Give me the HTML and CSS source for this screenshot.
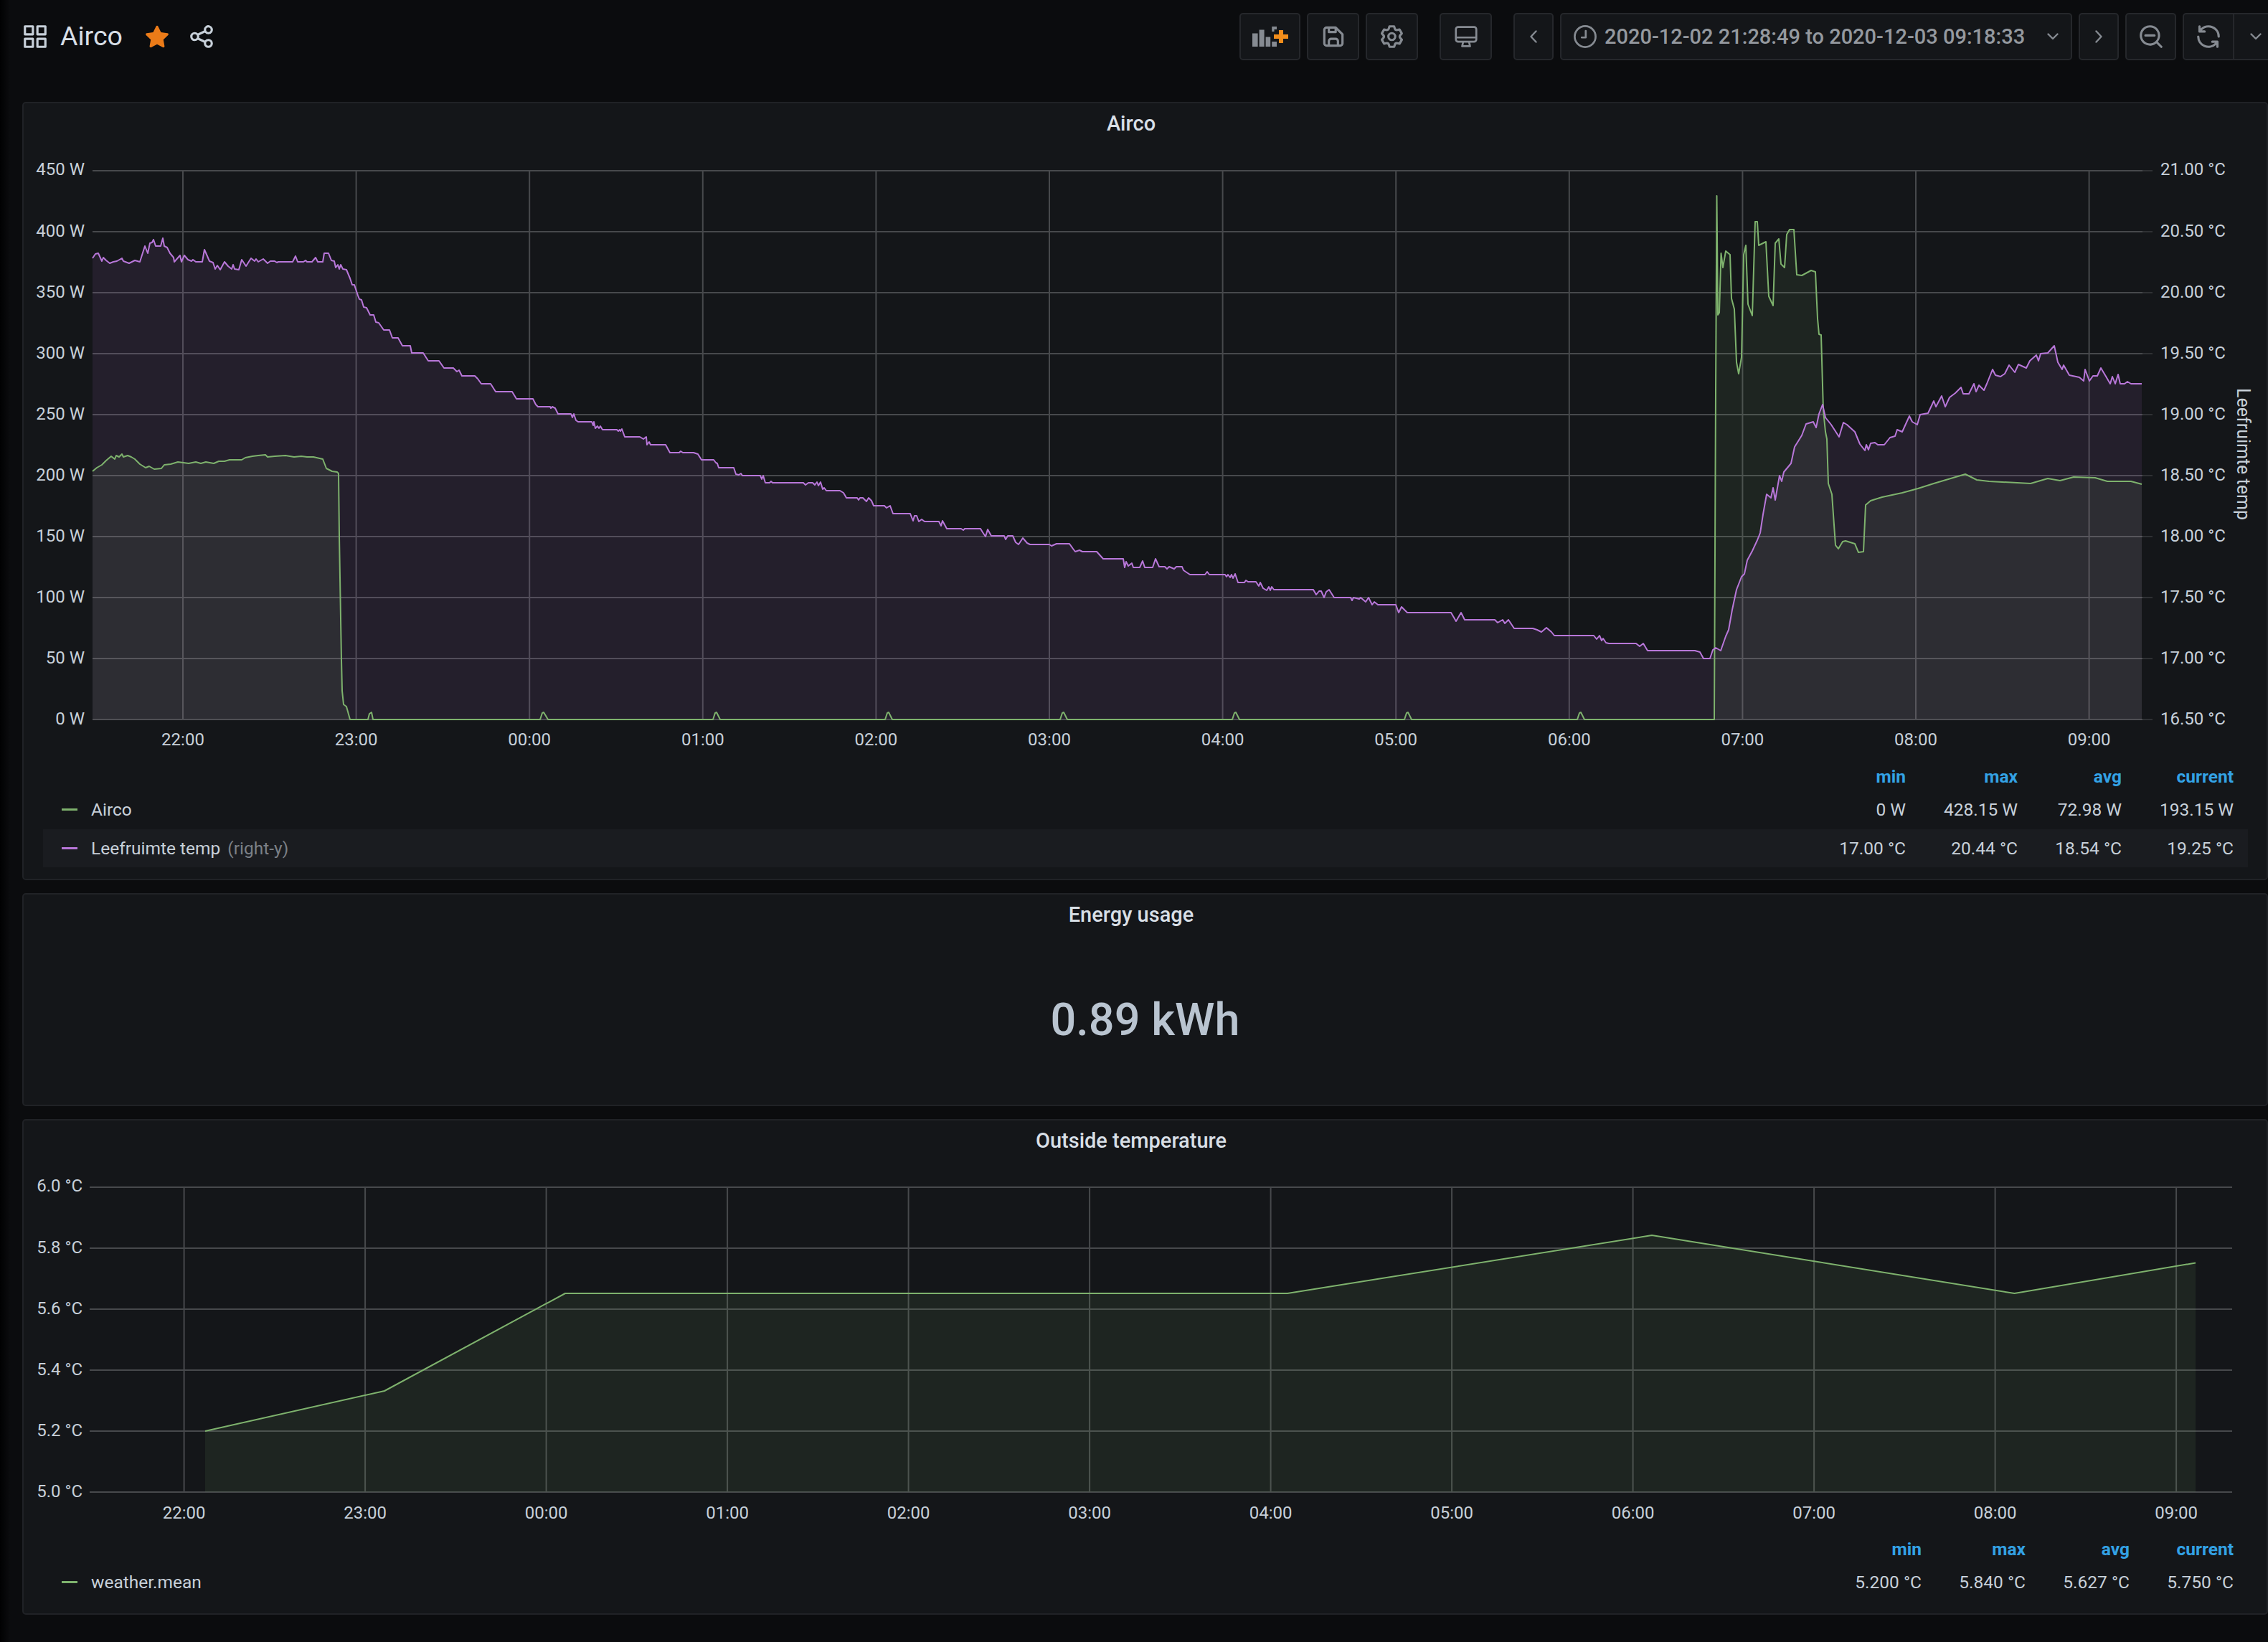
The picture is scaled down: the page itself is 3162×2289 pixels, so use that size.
FILE: index.html
```html
<!DOCTYPE html>
<html lang="en">
<head>
<meta charset="utf-8">
<title>Airco - Grafana</title>
<link rel="stylesheet" href="styles.css">
</head>
<body>
<header class="topbar">
  <div class="title-group">
    <svg class="icon icon-light" viewBox="0 0 24 24"><path d="M10,13H3a1,1,0,0,0-1,1v7a1,1,0,0,0,1,1h7a1,1,0,0,0,1-1V14A1,1,0,0,0,10,13ZM9,20H4V15H9ZM21,2H14a1,1,0,0,0-1,1v7a1,1,0,0,0,1,1h7a1,1,0,0,0,1-1V3A1,1,0,0,0,21,2ZM20,9H15V4h5Zm1,4H14a1,1,0,0,0-1,1v7a1,1,0,0,0,1,1h7a1,1,0,0,0,1-1V14A1,1,0,0,0,21,13Zm-1,7H15V15h5ZM10,2H3A1,1,0,0,0,2,3v7a1,1,0,0,0,1,1h7a1,1,0,0,0,1-1V3A1,1,0,0,0,10,2ZM9,9H4V4H9Z"/></svg>
    <h1 class="dash-title">Airco</h1>
    <svg class="icon icon-star" viewBox="0 0 24 24"><path d="M22,9.67A1,1,0,0,0,21.14,9l-5.69-.83L12.9,3a1,1,0,0,0-1.8,0L8.55,8.16,2.86,9a1,1,0,0,0-.81.68,1,1,0,0,0,.25,1l4.13,4-1,5.68A1,1,0,0,0,6.9,21.44L12,18.77l5.1,2.67a.93.93,0,0,0,.46.12,1,1,0,0,0,.59-.19,1,1,0,0,0,.4-1l-1-5.68,4.13-4A1,1,0,0,0,22,9.67Z"/></svg>
    <svg class="icon icon-light icon-share" viewBox="0 0 24 24"><path d="M18,14a4,4,0,0,0-3.08,1.48l-5.1-2.35a3.64,3.64,0,0,0,0-2.26l5.1-2.35A4,4,0,1,0,14,6a4.17,4.17,0,0,0,.07.71L8.79,9.14a4,4,0,1,0,0,5.72l5.28,2.43A4.17,4.17,0,0,0,14,18a4,4,0,1,0,4-4ZM18,4a2,2,0,1,1-2,2A2,2,0,0,1,18,4ZM6,14a2,2,0,1,1,2-2A2,2,0,0,1,6,14Zm12,6a2,2,0,1,1,2-2A2,2,0,0,1,18,20Z"/></svg>
  </div>
  <div class="toolbar">
    <div class="btn btn-add">
      <svg class="add-panel" viewBox="0 0 50 28">
        <rect class="bar" x="0" y="9.5" width="7.6" height="18.5"/>
        <rect class="bar" x="9.6" y="4.5" width="7" height="23.5"/>
        <rect class="bar" x="18.6" y="14.5" width="6.6" height="13.5"/>
        <path class="bar" d="M27.2 0H34V4H30.5V7H27.2ZM27.2 21H34V28H27.2Z"/>
        <path class="plus" d="M37 5h6v6h7v6h-7v6h-6v-6h-7v-6h7z"/>
      </svg>
    </div>
    <div class="btn btn-save"><svg class="icon" viewBox="0 0 24 24"><path d="M20.71,9.29l-6-6a1,1,0,0,0-.32-.21A1.09,1.09,0,0,0,14,3H6A3,3,0,0,0,3,6V18a3,3,0,0,0,3,3H18a3,3,0,0,0,3-3V10A1,1,0,0,0,20.71,9.29ZM9,5h4V7H9Zm6,14H9V16a1,1,0,0,1,1-1h4a1,1,0,0,1,1,1Zm4-1a1,1,0,0,1-1,1H17V16a3,3,0,0,0-3-3H10a3,3,0,0,0-3,3v3H6a1,1,0,0,1-1-1V6A1,1,0,0,1,6,5H7V8A1,1,0,0,0,8,9h6a1,1,0,0,0,1-1V6.41l4,4Z"/></svg></div>
    <div class="btn btn-gear"><svg class="icon" viewBox="0 0 24 24"><path d="M19.9,12.66a1,1,0,0,1,0-1.32L21.18,9.9a1,1,0,0,0,.12-1.17l-2-3.46a1,1,0,0,0-1.07-.48l-1.88.38a1,1,0,0,1-1.15-.66l-.61-1.83A1,1,0,0,0,13.64,2h-4a1,1,0,0,0-1,.68L8.08,4.51a1,1,0,0,1-1.15.66L5,4.79A1,1,0,0,0,4,5.27L2,8.73A1,1,0,0,0,2.1,9.9l1.27,1.44a1,1,0,0,1,0,1.32L2.1,14.1A1,1,0,0,0,2,15.27l2,3.46a1,1,0,0,0,1.07.48l1.88-.38a1,1,0,0,1,1.15.66l.61,1.83a1,1,0,0,0,1,.68h4a1,1,0,0,0,.95-.68l.61-1.83a1,1,0,0,1,1.15-.66l1.88.38a1,1,0,0,0,1.07-.48l2-3.46a1,1,0,0,0-.12-1.17ZM18.41,14l.8.9-1.28,2.22-1.18-.24a3,3,0,0,0-3.45,2L12.92,20H10.36L10,18.86a3,3,0,0,0-3.45-2l-1.18.24L4.07,14.89l.8-.9a3,3,0,0,0,0-4l-.8-.9L5.35,6.89l1.18.24a3,3,0,0,0,3.45-2L10.36,4h2.56l.38,1.14a3,3,0,0,0,3.45,2l1.18-.24,1.28,2.22-.8.9A3,3,0,0,0,18.41,14ZM11.64,8a4,4,0,1,0,4,4A4,4,0,0,0,11.64,8Zm0,6a2,2,0,1,1,2-2A2,2,0,0,1,11.64,14Z"/></svg></div>
    <div class="btn btn-tv"><svg class="icon" viewBox="0 0 24 24"><path class="outline" d="M5 3.500H19A2 2 0 0 1 21 5.500V14.500A2 2 0 0 1 19 16.500H5A2 2 0 0 1 3 14.500V5.500A2 2 0 0 1 5 3.500ZM3 12.800H21M9.500 16.500L8.500 20.500H15.500L14.500 16.500"/></svg></div>
    <div class="btn btn-nav"><svg class="chev-side" viewBox="0 0 10 18"><path class="outline" d="M8.500 1.500L1.500 9L8.500 16.500"/></svg></div>
    <div class="btn btn-time">
      <svg class="icon" viewBox="0 0 24 24"><circle class="outline" cx="12" cy="12" r="9.200"/><path class="outline" d="M12.500 7V12.800H9"/></svg>
      <span class="time-text">2020-12-02 21:28:49 to 2020-12-03 09:18:33</span>
      <svg class="chev-down" viewBox="0 0 16 10"><path class="outline" d="M1.500 1.500L8 8L14.500 1.500"/></svg>
    </div>
    <div class="btn btn-nav"><svg class="chev-side" viewBox="0 0 10 18"><path class="outline" d="M1.500 1.500L8.500 9L1.500 16.500"/></svg></div>
    <div class="btn btn-zoom"><svg class="icon" viewBox="0 0 24 24"><path d="M21.71,20.29,18,16.61A9,9,0,1,0,16.61,18l3.68,3.68a1,1,0,0,0,1.42,0A1,1,0,0,0,21.71,20.29ZM11,18a7,7,0,1,1,7-7A7,7,0,0,1,11,18Zm4-8H7a1,1,0,0,0,0,2h8a1,1,0,0,0,0-2Z"/></svg></div>
    <div class="btn btn-refresh">
      <div class="refresh-icon"><svg class="icon" viewBox="0 0 24 24"><path d="M19.91,15.51H15.38a1,1,0,0,0,0,2h2.4A8,8,0,0,1,4,12a1,1,0,0,0-2,0,10,10,0,0,0,16.88,7.230V21a1,1,0,0,0,2,0V16.500A1,1,0,0,0,19.91,15.51ZM12,2A10,10,0,0,0,5.120,4.770V3a1,1,0,0,0-2,0V7.500a1,1,0,0,0,1,1h4.500a1,1,0,0,0,0-2H6.220A8,8,0,0,1,20,12a1,1,0,0,0,2,0A10,10,0,0,0,12,2Z"/></svg></div>
      <div class="refresh-menu"><svg class="chev-down" viewBox="0 0 16 10"><path class="outline" d="M1.500 1.500L8 8L14.500 1.500"/></svg></div>
    </div>
  </div>
</header>

<main class="dashboard">
  <section class="panel">
    <h2 class="panel-title">Airco</h2>
    <svg class="graph graph-airco" viewBox="33 200 3127 850">
      <path class="grid" d="M129 238H2987M129 323H2987M129 408H2987M129 493H2987M129 578H2987M129 663H2987M129 748H2987M129 833H2987M129 918H2987M129 1003H2987"/>
      <path class="grid" d="M255 238V1003M496.600 238V1003M738.200 238V1003M979.800 238V1003M1221.400 238V1003M1463 238V1003M1704.600 238V1003M1946.200 238V1003M2187.800 238V1003M2429.400 238V1003M2671 238V1003M2912.600 238V1003"/>
      <path class="grid tick" d="M2987 238H3001M2987 323H3001M2987 408H3001M2987 493H3001M2987 578H3001M2987 663H3001M2987 748H3001M2987 833H3001M2987 918H3001M2987 1003H3001"/>
      <path class="area area-green" d="M129 1003L129 657L135 652L142 648L148 642L155 636L160 640L162 635L166 637L170 633L172 637L178 635L183 637L188 640L195 647L203 652L208 650L215 654L225 653L229 648L238 647L248 644L263 646L273 644L280 646L287 644L298 646L305 643L313 643L320 641L337 641L342 638L352 636L360 635L370 634L373 637L383 636L398 635L410 637L420 636L428 637L437 637L450 640L455 653L463 657L470 658L472 660L473 747L476 920L477 963L479 982L483 985L488 1003L2390 1003L2392 546L2393.500 273L2395 439L2397 436L2399.500 353L2402 373L2406 350L2412 355L2414 416L2418 431L2421 505L2424 521L2428 498L2431 355L2434 342L2437 424L2443 440L2447 309L2450 309L2452 342L2462 337L2466 413L2472 426L2475 339L2480 333L2483 368L2488 373L2491 327L2495 320L2501 320L2505 383L2512 384L2525 377L2531 379L2534 444L2536 466L2539 467L2542 572L2545 602L2547 612L2549 674L2554 689L2559 760L2563 765L2569 755L2573 754L2586 758L2591 770L2598 769L2601 704L2608 698L2624 693L2652 687L2674 681L2696 674L2723 666L2740 661L2756 669L2773 671L2831 674L2855 667L2872 670L2891 665L2921 666L2938 671L2971 671L2986 675L2986 1003Z"/>
      <path class="area area-purple" d="M129 1003L129 360L133 354L137 353L142 364L144 359L148 363L153 367L158 365L163 364L170 360L172 364L180 367L188 363L195 365L202 343L206 353L209 339L212 338L214 334L217 343L224 343L227 332L229 343L233 345L237 353L242 359L243 365L251 356L253 365L257 356L262 362L267 364L269 362L273 365L282 365L285 348L289 357L292 364L297 366L300 375L303 370L307 376L313 365L318 371L323 375L325 369L327 375L333 376L337 362L343 371L350 360L355 364L357 361L360 365L367 361L373 367L377 364L383 364L386 366L388 365L408 365L412 357L415 365L423 365L426 363L428 365L435 365L440 359L443 365L450 365L452 353L458 353L462 363L466 364L468 373L471 369L473 375L475 369L478 375L483 376L488 388L491 397L494 397L499 412L501 417L504 418L507 428L511 429L516 439L521 439L524 449L528 450L535 460L543 460L547 471L555 471L561 482L572 482L574 492L585 492L590 492L597 503L612 503L619 513L632 513L637 518L640 516L644 524L662 524L666 528L671 535L684 535L691 546L714 546L720 556L743 556L747 564L750 567L767 567L768 569L770 567L774 569L778 577L796 577L798 582L800 577L803 586L806 588L825 588L827 593L828 588L830 597L833 594L835 597L837 594L840 599L860 599L862 601L864 599L865 601L867 598L871 609L892 609L897 612L901 609L902 620L905 616L907 620L928 620L934 631L947 631L949 629L952 631L967 631L973 633L978 641L995 641L998 645L1000 646L1002 652L1023 652L1026 661L1030 662L1033 660L1035 663L1060 663L1062 668L1064 663L1067 673L1073 673L1075 671L1077 673L1120 673L1123 676L1127 673L1133 673L1136 676L1139 672L1141 677L1144 672L1147 682L1149 680L1152 684L1171 684L1176 687L1180 694L1195 694L1197 697L1199 694L1203 694L1208 699L1211 694L1215 698L1218 705L1233 705L1236 708L1241 705L1245 716L1269 716L1273 726L1275 719L1278 719L1281 727L1285 724L1289 727L1309 727L1312 733L1314 726L1320 737L1340 737L1343 739L1345 737L1367 737L1370 742L1374 748L1377 738L1382 747L1400 747L1402 752L1405 747L1412 747L1416 756L1420 759L1426 750L1432 757L1436 759L1463 759L1466 761L1473 758L1491 758L1496 765L1499 769L1505 767L1509 769L1529 769L1538 779L1566 779L1568 791L1570 783L1573 789L1578 785L1580 791L1589 791L1593 782L1596 791L1607 791L1611 779L1616 790L1624 790L1627 793L1630 790L1637 793L1640 790L1648 790L1650 795L1659 801L1680 801L1683 797L1686 801L1708 801L1710 804L1712 801L1715 805L1717 801L1719 806L1722 800L1726 812L1735 812L1737 809L1740 811L1751 811L1755 817L1757 812L1761 820L1766 823L1769 818L1771 823L1773 818L1776 822L1831 822L1835 829L1839 824L1842 824L1846 833L1849 825L1853 822L1860 833L1883 833L1885 837L1887 833L1895 835L1897 833L1904 839L1908 833L1913 843L1916 839L1921 843L1946 843L1950 854L1954 846L1962 854L2023 854L2030 866L2037 854L2042 864L2084 864L2088 868L2095 864L2098 869L2103 864L2111 876L2137 876L2143 878L2149 881L2156 875L2163 881L2167 886L2222 886L2226 891L2230 886L2233 893L2235 890L2239 896L2243 897L2281 897L2286 901L2291 897L2297 907L2363 907L2370 909L2375 918L2384 918L2388 906L2392 903L2399 907L2406 887L2410 878L2415 850L2421 822L2428 804L2432 800L2436 781L2443 768L2450 753L2454 743L2458 717L2463 689L2469 694L2472 680L2475 697L2481 663L2484 671L2487 658L2497 646L2502 623L2512 607L2518 591L2528 588L2532 596L2536 577L2541 564L2545 582L2553 592L2564 609L2570 589L2575 592L2586 602L2593 619L2600 628L2602 620L2605 627L2608 618L2614 617L2618 620L2627 620L2635 610L2642 608L2645 599L2652 602L2662 580L2666 588L2673 592L2677 578L2688 576L2696 559L2699 567L2707 552L2712 567L2718 554L2726 548L2734 540L2737 549L2745 549L2752 535L2755 546L2759 537L2766 544L2770 535L2778 515L2782 523L2789 525L2795 521L2801 509L2809 519L2814 508L2825 513L2830 503L2839 495L2842 503L2845 493L2855 492L2864 482L2869 505L2875 515L2877 509L2885 523L2899 526L2905 531L2907 515L2913 531L2918 524L2924 524L2929 513L2935 523L2942 535L2945 525L2949 535L2953 522L2956 535L2962 535L2966 532L2971 535L2986 535L2986 1003Z"/>
      <path class="line line-green" d="M129 657L135 652L142 648L148 642L155 636L160 640L162 635L166 637L170 633L172 637L178 635L183 637L188 640L195 647L203 652L208 650L215 654L225 653L229 648L238 647L248 644L263 646L273 644L280 646L287 644L298 646L305 643L313 643L320 641L337 641L342 638L352 636L360 635L370 634L373 637L383 636L398 635L410 637L420 636L428 637L437 637L450 640L455 653L463 657L470 658L472 660L473 747L476 920L477 963L479 982L483 985L488 1003L513 1003L515 995L518 993L520 1003L753 1003L756 994L758 993L764 1003L994 1003L997 994L999 993L1004 1003L1234 1003L1237 994L1239 993L1244 1003L1478 1003L1481 994L1483 993L1488 1003L1718 1003L1721 994L1723 993L1728 1003L1958 1003L1961 994L1963 993L1968 1003L2199 1003L2202 994L2204 993L2209 1003L2390 1003L2392 546L2393.500 273L2395 439L2397 436L2399.500 353L2402 373L2406 350L2412 355L2414 416L2418 431L2421 505L2424 521L2428 498L2431 355L2434 342L2437 424L2443 440L2447 309L2450 309L2452 342L2462 337L2466 413L2472 426L2475 339L2480 333L2483 368L2488 373L2491 327L2495 320L2501 320L2505 383L2512 384L2525 377L2531 379L2534 444L2536 466L2539 467L2542 572L2545 602L2547 612L2549 674L2554 689L2559 760L2563 765L2569 755L2573 754L2586 758L2591 770L2598 769L2601 704L2608 698L2624 693L2652 687L2674 681L2696 674L2723 666L2740 661L2756 669L2773 671L2831 674L2855 667L2872 670L2891 665L2921 666L2938 671L2971 671L2986 675"/>
      <path class="line line-purple" d="M129 360L133 354L137 353L142 364L144 359L148 363L153 367L158 365L163 364L170 360L172 364L180 367L188 363L195 365L202 343L206 353L209 339L212 338L214 334L217 343L224 343L227 332L229 343L233 345L237 353L242 359L243 365L251 356L253 365L257 356L262 362L267 364L269 362L273 365L282 365L285 348L289 357L292 364L297 366L300 375L303 370L307 376L313 365L318 371L323 375L325 369L327 375L333 376L337 362L343 371L350 360L355 364L357 361L360 365L367 361L373 367L377 364L383 364L386 366L388 365L408 365L412 357L415 365L423 365L426 363L428 365L435 365L440 359L443 365L450 365L452 353L458 353L462 363L466 364L468 373L471 369L473 375L475 369L478 375L483 376L488 388L491 397L494 397L499 412L501 417L504 418L507 428L511 429L516 439L521 439L524 449L528 450L535 460L543 460L547 471L555 471L561 482L572 482L574 492L585 492L590 492L597 503L612 503L619 513L632 513L637 518L640 516L644 524L662 524L666 528L671 535L684 535L691 546L714 546L720 556L743 556L747 564L750 567L767 567L768 569L770 567L774 569L778 577L796 577L798 582L800 577L803 586L806 588L825 588L827 593L828 588L830 597L833 594L835 597L837 594L840 599L860 599L862 601L864 599L865 601L867 598L871 609L892 609L897 612L901 609L902 620L905 616L907 620L928 620L934 631L947 631L949 629L952 631L967 631L973 633L978 641L995 641L998 645L1000 646L1002 652L1023 652L1026 661L1030 662L1033 660L1035 663L1060 663L1062 668L1064 663L1067 673L1073 673L1075 671L1077 673L1120 673L1123 676L1127 673L1133 673L1136 676L1139 672L1141 677L1144 672L1147 682L1149 680L1152 684L1171 684L1176 687L1180 694L1195 694L1197 697L1199 694L1203 694L1208 699L1211 694L1215 698L1218 705L1233 705L1236 708L1241 705L1245 716L1269 716L1273 726L1275 719L1278 719L1281 727L1285 724L1289 727L1309 727L1312 733L1314 726L1320 737L1340 737L1343 739L1345 737L1367 737L1370 742L1374 748L1377 738L1382 747L1400 747L1402 752L1405 747L1412 747L1416 756L1420 759L1426 750L1432 757L1436 759L1463 759L1466 761L1473 758L1491 758L1496 765L1499 769L1505 767L1509 769L1529 769L1538 779L1566 779L1568 791L1570 783L1573 789L1578 785L1580 791L1589 791L1593 782L1596 791L1607 791L1611 779L1616 790L1624 790L1627 793L1630 790L1637 793L1640 790L1648 790L1650 795L1659 801L1680 801L1683 797L1686 801L1708 801L1710 804L1712 801L1715 805L1717 801L1719 806L1722 800L1726 812L1735 812L1737 809L1740 811L1751 811L1755 817L1757 812L1761 820L1766 823L1769 818L1771 823L1773 818L1776 822L1831 822L1835 829L1839 824L1842 824L1846 833L1849 825L1853 822L1860 833L1883 833L1885 837L1887 833L1895 835L1897 833L1904 839L1908 833L1913 843L1916 839L1921 843L1946 843L1950 854L1954 846L1962 854L2023 854L2030 866L2037 854L2042 864L2084 864L2088 868L2095 864L2098 869L2103 864L2111 876L2137 876L2143 878L2149 881L2156 875L2163 881L2167 886L2222 886L2226 891L2230 886L2233 893L2235 890L2239 896L2243 897L2281 897L2286 901L2291 897L2297 907L2363 907L2370 909L2375 918L2384 918L2388 906L2392 903L2399 907L2406 887L2410 878L2415 850L2421 822L2428 804L2432 800L2436 781L2443 768L2450 753L2454 743L2458 717L2463 689L2469 694L2472 680L2475 697L2481 663L2484 671L2487 658L2497 646L2502 623L2512 607L2518 591L2528 588L2532 596L2536 577L2541 564L2545 582L2553 592L2564 609L2570 589L2575 592L2586 602L2593 619L2600 628L2602 620L2605 627L2608 618L2614 617L2618 620L2627 620L2635 610L2642 608L2645 599L2652 602L2662 580L2666 588L2673 592L2677 578L2688 576L2696 559L2699 567L2707 552L2712 567L2718 554L2726 548L2734 540L2737 549L2745 549L2752 535L2755 546L2759 537L2766 544L2770 535L2778 515L2782 523L2789 525L2795 521L2801 509L2809 519L2814 508L2825 513L2830 503L2839 495L2842 503L2845 493L2855 492L2864 482L2869 505L2875 515L2877 509L2885 523L2899 526L2905 531L2907 515L2913 531L2918 524L2924 524L2929 513L2935 523L2942 535L2945 525L2949 535L2953 522L2956 535L2962 535L2966 532L2971 535L2986 535"/>
      <g class="axis axis-left">
        <text x="118" y="236">450 W</text><text x="118" y="322">400 W</text><text x="118" y="407">350 W</text><text x="118" y="492">300 W</text><text x="118" y="577">250 W</text><text x="118" y="662">200 W</text><text x="118" y="747">150 W</text><text x="118" y="832">100 W</text><text x="118" y="917">50 W</text><text x="118" y="1002">0 W</text>
      </g>
      <g class="axis axis-right">
        <text x="3012" y="236">21.00 °C</text><text x="3012" y="322">20.50 °C</text><text x="3012" y="407">20.00 °C</text><text x="3012" y="492">19.50 °C</text><text x="3012" y="577">19.00 °C</text><text x="3012" y="662">18.50 °C</text><text x="3012" y="747">18.00 °C</text><text x="3012" y="832">17.50 °C</text><text x="3012" y="917">17.00 °C</text><text x="3012" y="1002">16.50 °C</text>
      </g>
      <g class="axis axis-bottom">
        <text x="255" y="1031">22:00</text><text x="496.600" y="1031">23:00</text><text x="738.200" y="1031">00:00</text><text x="979.800" y="1031">01:00</text><text x="1221.400" y="1031">02:00</text><text x="1463" y="1031">03:00</text><text x="1704.600" y="1031">04:00</text><text x="1946.200" y="1031">05:00</text><text x="2187.800" y="1031">06:00</text><text x="2429.400" y="1031">07:00</text><text x="2671" y="1031">08:00</text><text x="2912.600" y="1031">09:00</text>
      </g>
      <text class="axis axis-bottom axis-title" transform="rotate(90 3127 633)" x="3127" y="633">Leefruimte temp</text>
    </svg>
    <div class="legend legend-wide">
      <div class="legend-row legend-head"><span></span><span>min</span><span>max</span><span>avg</span><span>current</span></div>
      <div class="legend-row legend-first">
        <span class="series"><i class="swatch swatch-green"></i>Airco</span><span>0 W</span><span>428.15 W</span><span>72.98 W</span><span>193.15 W</span>
      </div>
      <div class="legend-row legend-alt">
        <span class="series"><i class="swatch swatch-purple"></i>Leefruimte temp <em class="axis-note">(right-y)</em></span><span>17.00 °C</span><span>20.44 °C</span><span>18.54 °C</span><span>19.25 °C</span>
      </div>
    </div>
  </section>

  <section class="panel">
    <h2 class="panel-title">Energy usage</h2>
    <div class="stat">0.89 kWh</div>
  </section>

  <section class="panel">
    <h2 class="panel-title">Outside temperature</h2>
    <svg class="graph graph-outside" viewBox="33 1618 3127 512">
      <path class="grid" d="M125 1655H3112M125 1740H3112M125 1825H3112M125 1910H3112M125 1995H3112M125 2080H3112"/>
      <path class="grid" d="M256.600 1655V2080M509.100 1655V2080M761.600 1655V2080M1014.100 1655V2080M1266.600 1655V2080M1519.100 1655V2080M1771.600 1655V2080M2024.100 1655V2080M2276.600 1655V2080M2529.100 1655V2080M2781.600 1655V2080M3034.100 1655V2080"/>
      <path class="area area-green" d="M286 2080L286 1995L536 1939L788 1803L1795 1803L2303 1722L2808.500 1803L3061 1760.500L3061 2080Z"/>
      <path class="line line-green" d="M286 1995L536 1939L788 1803L1795 1803L2303 1722L2808.500 1803L3061 1760.500"/>
      <g class="axis axis-left">
        <text x="115" y="1653">6.0 °C</text><text x="115" y="1739">5.8 °C</text><text x="115" y="1824">5.6 °C</text><text x="115" y="1909">5.4 °C</text><text x="115" y="1994">5.2 °C</text><text x="115" y="2079">5.0 °C</text>
      </g>
      <g class="axis axis-bottom">
        <text x="256.600" y="2109">22:00</text><text x="509.100" y="2109">23:00</text><text x="761.600" y="2109">00:00</text><text x="1014.100" y="2109">01:00</text><text x="1266.600" y="2109">02:00</text><text x="1519.100" y="2109">03:00</text><text x="1771.600" y="2109">04:00</text><text x="2024.100" y="2109">05:00</text><text x="2276.600" y="2109">06:00</text><text x="2529.100" y="2109">07:00</text><text x="2781.600" y="2109">08:00</text><text x="3034.100" y="2109">09:00</text>
      </g>
    </svg>
    <div class="legend legend-narrow">
      <div class="legend-row legend-head"><span></span><span>min</span><span>max</span><span>avg</span><span>current</span></div>
      <div class="legend-row">
        <span class="series"><i class="swatch swatch-green"></i>weather.mean</span><span>5.200 °C</span><span>5.840 °C</span><span>5.627 °C</span><span>5.750 °C</span>
      </div>
    </div>
  </section>
</main>
</body>
</html>
```
FILE: styles.css
```css
* { box-sizing: border-box; }
html, body { margin: 0; height: 2289px; overflow: hidden; }
body {
  padding-left: 31px;
  background: linear-gradient(90deg, #010102 0, #0b0c0e 14px) #0b0c0e;
  font-family: Roboto, "Liberation Sans", sans-serif;
  color: #c7d0d9;
}

.topbar { display: flex; align-items: flex-start; height: 142px; padding-top: 18px; }
.title-group { display: flex; align-items: center; flex: none; width: 1698px; height: 66px; margin-left: -1px; }
.dash-title { margin: 0 0 0 16px; font-size: 37.5px; font-weight: 400; line-height: 1; color: #d8dfe6; }
.icon { display: block; flex: none; width: 38px; height: 38px; fill: #868b92; }
.icon-light { fill: #c7d0d9; }
.icon-star { fill: #eb7b18; margin-left: 29px; }
.icon-share { margin-left: 24px; }
.outline { fill: none; stroke: #868b92; stroke-width: 1.7; stroke-linecap: round; stroke-linejoin: round; }

.toolbar { display: flex; flex: none; gap: 9px; }
.btn {
  display: flex; align-items: center; justify-content: center; flex: none;
  height: 66px; background: #141619; border: 2px solid #25272b; border-radius: 5px;
}
.btn-add { width: 85px; }
.btn-save, .btn-gear { width: 73px; }
.btn-tv { width: 73px; margin: 0 21px; }
.btn-nav { width: 56px; }
.btn-time { width: 714px; justify-content: flex-start; padding-left: 14px; }
.btn-zoom { width: 71px; }
.btn-refresh { width: 160px; justify-content: flex-start; }
.add-panel { display: block; width: 50px; height: 28px; }
.bar { fill: #868b92; }
.plus { fill: #f18d1b; }
.chev-side { display: block; width: 10px; height: 18px; }
.chev-side .outline, .chev-down .outline { stroke-width: 2.4; }
.chev-down { display: block; flex: none; width: 16px; height: 10px; }
.time-text { margin-left: 8px; font-size: 29px; font-weight: 500; color: #94999f; white-space: nowrap; }
.btn-time .chev-down { margin-left: 31px; }
.refresh-icon { display: flex; align-items: center; justify-content: center; width: 70px; height: 100%; border-right: 2px solid #25272b; }
.refresh-menu { display: flex; align-items: center; padding-left: 22px; }

.dashboard { display: flex; flex-direction: column; gap: 18px; width: 3131px; }
.panel { background: #141619; border: 2px solid #202226; border-radius: 5px; }
.panel-title {
  margin: 0; height: 56px; padding-right: 39px; text-align: center;
  font-size: 29px; font-weight: 500; line-height: 56px; color: #d8dfe6;
}
.graph { display: block; width: 3127px; }
.graph-airco { height: 850px; }
.graph-outside { height: 512px; }
.grid { fill: none; stroke: #47494c; stroke-width: 2; }
.tick { stroke: #2f3134; }
.area { stroke: none; }
.area-green { fill: #7eb26d; fill-opacity: 0.1; }
.area-purple { fill: #b877d9; fill-opacity: 0.1; }
.line { fill: none; stroke-width: 2; stroke-linejoin: round; }
.line-green { stroke: #7eb26d; }
.line-purple { stroke: #b877d9; }
.axis { font-size: 24px; fill: #c7d0d9; dominant-baseline: central; }
.axis-left { text-anchor: end; }
.axis-right { text-anchor: start; }
.axis-bottom { text-anchor: middle; }
.axis-title { font-size: 25px; }

.legend { margin: 11px 26px 16px 27px; font-size: 24.5px; }
.legend-row { display: grid; align-items: center; height: 53px; text-align: right; }
.legend-wide .legend-row { grid-template-columns: 1fr 160px 156px 145px 156px; padding-right: 20px; }
.legend-first { padding-bottom: 3px; }
.legend-narrow { margin-top: 8px; margin-bottom: 19px; }
.legend-narrow .legend-row { grid-template-columns: 1fr 160px 145px 145px 145px; height: 50px; padding-right: 20px; }
.legend .legend-head { height: 42px; font-weight: 700; color: #33a2e5; }
.legend-alt { background: #1a1c20; }
.series { display: flex; align-items: center; padding-left: 26px; text-align: left; color: #c7d0d9; white-space: pre; }
.swatch { flex: none; width: 22px; height: 3px; margin-right: 19px; }
.swatch-green { background: #7eb26d; }
.swatch-purple { background: #b877d9; }
.axis-note { margin-left: 4px; font-style: normal; color: #7b8087; }

.stat { height: 237px; text-align: center; font-size: 63px; font-weight: 500; line-height: 237px; color: #b9c4d0; }
```
